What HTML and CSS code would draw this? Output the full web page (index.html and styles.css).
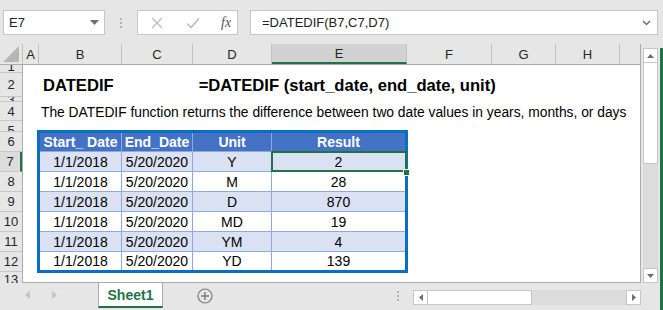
FILE: index.html
```html
<!DOCTYPE html>
<html lang="en">
<head>
    <meta charset="UTF-8">
    <title>DATEDIF</title>
    <link rel="stylesheet" href="styles.css">
</head>
<body>
    <div class="xl-app">
        <!-- Formula bar -->
        <div class="xl-toolbar">
            <div class="xl-namebox">
                <span>E7</span>
                <svg width="9" height="5" viewBox="0 0 9 5"><path d="M0 0h9L4.5 5z" fill="#6d6d6d"/></svg>
            </div>
            <div class="xl-grip"><i></i><i></i><i></i></div>
            <div class="xl-fxbox">
                <svg width="12" height="12" viewBox="0 0 12 12"><path d="M1 1l10 10M11 1L1 11" stroke="#bdbdbd" stroke-width="1.4"/></svg>
                <svg width="14" height="12" viewBox="0 0 14 12"><path d="M1 6.5l4 4L13 1.5" stroke="#bdbdbd" stroke-width="1.6" fill="none"/></svg>
                <span class="xl-fx">fx</span>
            </div>
            <div class="xl-formula">
                <span>=DATEDIF(B7,C7,D7)</span>
                <svg width="9" height="6" viewBox="0 0 9 6"><path d="M1 1l3.5 3.5L8 1" stroke="#6d6d6d" stroke-width="1.5" fill="none"/></svg>
            </div>
        </div>

        <div class="xl-main">
            <div class="xl-grid">
                <div class="xl-colheads">
                    <div class="xl-corner"><svg width="16" height="16" viewBox="0 0 16 16"><path d="M16 0V16H0z" fill="#b6b6b6"/></svg></div>
                    <div class="xl-ch w-a">A</div>
                    <div class="xl-ch w-b">B</div>
                    <div class="xl-ch w-c">C</div>
                    <div class="xl-ch w-d">D</div>
                    <div class="xl-ch w-e active">E</div>
                    <div class="xl-ch w-f">F</div>
                    <div class="xl-ch w-g">G</div>
                    <div class="xl-ch w-h">H</div>
                    <div class="xl-ch w-i"></div>
                </div>

                <div class="xl-body">
                    <div class="xl-rowheads">
                        <div class="xl-rh r-1"><span>1</span></div>
                        <div class="xl-rh r-2">2</div>
                        <div class="xl-rh r-3"><span>3</span></div>
                        <div class="xl-rh r-4">4</div>
                        <div class="xl-rh r-5"><span>5</span></div>
                        <div class="xl-rh">6</div>
                        <div class="xl-rh active">7</div>
                        <div class="xl-rh">8</div>
                        <div class="xl-rh">9</div>
                        <div class="xl-rh">10</div>
                        <div class="xl-rh">11</div>
                        <div class="xl-rh">12</div>
                        <div class="xl-rh r-13"><span>13</span></div>
                    </div>

                    <div class="xl-sheet">
                        <div class="row-1"></div>
                        <div class="row-2">
                            <span class="title">DATEDIF</span>
                            <span class="syntax">=DATEDIF (start_date, end_date, unit)</span>
                        </div>
                        <div class="row-3"></div>
                        <div class="row-4">The DATEDIF function returns the difference between two date values in years, months, or days</div>
                        <div class="row-5"></div>

                        <div class="xl-table">
                            <div class="tr th">
                                <div>Start_ Date</div><div>End_Date</div><div>Unit</div><div>Result</div>
                            </div>
                            <div class="tr band">
                                <div>1/1/2018</div><div>5/20/2020</div><div>Y</div><div class="sel">2<span class="handle"></span></div>
                            </div>
                            <div class="tr">
                                <div>1/1/2018</div><div>5/20/2020</div><div>M</div><div>28</div>
                            </div>
                            <div class="tr band">
                                <div>1/1/2018</div><div>5/20/2020</div><div>D</div><div>870</div>
                            </div>
                            <div class="tr">
                                <div>1/1/2018</div><div>5/20/2020</div><div>MD</div><div>19</div>
                            </div>
                            <div class="tr band">
                                <div>1/1/2018</div><div>5/20/2020</div><div>YM</div><div>4</div>
                            </div>
                            <div class="tr last">
                                <div>1/1/2018</div><div>5/20/2020</div><div>YD</div><div>139</div>
                            </div>
                        </div>
                    </div>
                </div>
            </div>

            <div class="xl-vscroll">
                <div class="sb-btn"><svg width="7" height="4" viewBox="0 0 7 4"><path d="M0 4h7L3.5 0z" fill="#6d6d6d"/></svg></div>
                <div class="sb-thumb"></div>
                <div class="sb-track"></div>
                <div class="sb-btn"><svg width="7" height="4" viewBox="0 0 7 4"><path d="M0 0h7L3.5 4z" fill="#6d6d6d"/></svg></div>
            </div>
        </div>

        <!-- Sheet tabs -->
        <div class="xl-tabbar">
            <div class="tab-nav">
                <svg width="5" height="8" viewBox="0 0 5 8"><path d="M5 0v8L0 4z" fill="#c4c4c4"/></svg>
                <svg width="5" height="8" viewBox="0 0 5 8"><path d="M0 0v8l5-4z" fill="#c4c4c4"/></svg>
            </div>
            <div class="tab active">Sheet1</div>
            <div class="tab-add">
                <svg width="16" height="16" viewBox="0 0 16 16"><circle cx="8" cy="8" r="7" fill="none" stroke="#7a7a7a" stroke-width="1.2"/><path d="M8 4v8M4 8h8" stroke="#7a7a7a" stroke-width="1.4"/></svg>
            </div>
            <div class="xl-grip tab-grip"><i></i><i></i><i></i></div>
            <div class="xl-hscroll">
                <div class="sb-btn"><svg width="4" height="7" viewBox="0 0 4 7"><path d="M4 0v7L0 3.5z" fill="#6d6d6d"/></svg></div>
                <div class="sb-thumb"></div>
                <div class="sb-track"></div>
                <div class="sb-btn"><svg width="4" height="7" viewBox="0 0 4 7"><path d="M0 0v7l4-3.5z" fill="#6d6d6d"/></svg></div>
            </div>
        </div>
    </div>
</body>
</html>
```

FILE: styles.css
```css
/* Excel-like sheet view */
* {
    box-sizing: border-box;
}

body {
    margin: 0;
    font-family: 'Liberation Sans', Arial, sans-serif;
    color: #000;
}

.xl-app {
    width: 663px;
    height: 310px;
    background-color: #e6e6e6;
    overflow: hidden;
}

/* Formula bar */
.xl-toolbar {
    height: 44px;
    display: flex;
    align-items: flex-start;
    padding: 10px 5px 0 3px;
    font-size: 13px;
}

.xl-namebox {
    width: 102px;
    height: 25px;
    background: #fff;
    border: 1px solid #c6c6c6;
    display: flex;
    align-items: center;
    justify-content: space-between;
    padding: 0 5px 0 5px;
    color: #222;
}

.xl-grip {
    width: 32px;
    height: 25px;
    display: flex;
    flex-direction: column;
    align-items: center;
    justify-content: center;
    gap: 2px;
}

.xl-grip i {
    width: 2px;
    height: 2px;
    background: #b3b3b3;
}

.xl-fxbox {
    width: 101px;
    height: 25px;
    background: #fff;
    border: 1px solid #c6c6c6;
    display: flex;
    align-items: center;
    padding-left: 13px;
    gap: 23px;
}

.xl-fx {
    font-family: 'Liberation Serif', serif;
    font-style: italic;
    font-size: 14px;
    color: #555;
    margin-left: -2px;
}

.xl-formula {
    flex: 1;
    height: 25px;
    margin-left: 12px;
    background: #fff;
    border: 1px solid #c6c6c6;
    display: flex;
    align-items: center;
    justify-content: space-between;
    padding: 0 6px 0 11px;
    color: #222;
}

/* Main area */
.xl-main {
    display: flex;
    height: 239px;
}

.xl-grid {
    width: 641px;
}

.xl-colheads {
    display: flex;
    height: 21px;
    border-bottom: 1px solid #ababab;
    font-size: 13px;
    color: #262626;
}

.xl-corner {
    width: 23px;
    border-right: 1px solid #c2c2c2;
    display: flex;
    align-items: flex-end;
    justify-content: flex-end;
    padding: 0 3px 2px 0;
}

.xl-ch {
    border-right: 1px solid #c2c2c2;
    display: flex;
    align-items: center;
    justify-content: center;
}

.xl-ch.active {
    background: #d2d2d2;
    border-bottom: 2px solid #217346;
}

.w-a { width: 16px; }
.w-b { width: 83px; }
.w-c { width: 71px; }
.w-d { width: 79px; }
.w-e { width: 135px; }
.w-f { width: 85px; }
.w-g { width: 64px; }
.w-h { width: 64px; }
.w-i { width: 21px; border-right: 1px solid #ababab; }

.xl-body {
    display: flex;
    height: 218px;
}

.xl-rowheads {
    width: 23px;
    border-right: 1px solid #ababab;
    font-size: 13px;
    color: #262626;
    overflow: hidden;
}

.xl-rh {
    height: 20px;
    border-bottom: 1px solid #c8c8c8;
    display: flex;
    align-items: center;
    justify-content: center;
    overflow: hidden;
}

.xl-rh.active {
    background: #dcdcdc;
    border-right: 2px solid #217346;
}

/* collapsed rows: label clipped inside its own box */
.xl-rh span {
    display: block;
    height: 100%;
    overflow: hidden;
}

.r-1 { height: 8px; }
.r-1 span { line-height: 4px; }
.r-2 { height: 24px; }
.r-3 { height: 5px; }
.r-3 span { line-height: 5px; }
.r-4 { height: 19px; }
.r-5 { height: 11px; }
.r-5 span { line-height: 19px; }
.r-13 { height: 11px; border-bottom: none; }
.r-13 span { line-height: 16px; }

.xl-sheet {
    flex: 1;
    background: #fff;
    border-right: 1px solid #ababab;
    border-bottom: 1px solid #ababab;
    position: relative;
}

.row-1 { height: 8px; }

.row-2 {
    height: 25px;
    display: flex;
    align-items: center;
    font-weight: bold;
    font-size: 16.6px;
    padding-left: 20px;
}

.row-2 .syntax {
    margin-left: 85px;
}

.row-3 { height: 5px; }

.row-4 {
    height: 19px;
    display: flex;
    align-items: center;
    padding-left: 18px;
    font-size: 13.8px;
}

.row-5 { height: 8px; }

/* Data table */
.xl-table {
    width: 371px;
    margin-left: 14px;
    border: 3px solid #0a6fc2;
    font-size: 14px;
}

.tr {
    display: grid;
    grid-template-columns: 82px 71px 79px 1fr;
    height: 20px;
    border-bottom: 1px solid #8eaadb;
}

.tr.last {
    border-bottom: none;
    height: 18px;
}

.tr > div {
    display: flex;
    align-items: center;
    justify-content: center;
    border-right: 1px solid #8eaadb;
}

.tr > div:last-child {
    border-right: none;
}

.th {
    background: #4472c4;
    color: #fff;
    font-weight: bold;
    height: 19px;
}

.band {
    background: #d9e1f2;
}

.sel {
    position: relative;
}

.sel::after {
    content: '';
    position: absolute;
    left: -1px;
    top: -1px;
    right: -2px;
    bottom: -1px;
    border: 2px solid #217346;
}

.handle {
    position: absolute;
    right: -5px;
    bottom: -5px;
    width: 7px;
    height: 7px;
    background: #217346;
    border: 1px solid #fff;
    z-index: 2;
}

/* Vertical scrollbar */
.xl-vscroll {
    width: 22px;
    margin-top: 4px;
    padding-left: 2px;
    border-right: 3px solid #217346;
    display: flex;
    flex-direction: column;
}

.sb-btn {
    flex: none;
    width: 15px;
    height: 15px;
    background: #fff;
    border: 1px solid #c6c6c6;
    display: flex;
    align-items: center;
    justify-content: center;
}

.sb-thumb {
    flex: none;
    height: 101px;
    width: 15px;
    background: #fff;
    border: 1px solid #c6c6c6;
    border-top: none;
}

.sb-track {
    flex: 1;
    width: 15px;
    background: #dcdcdc;
}

/* Sheet tab bar */
.xl-tabbar {
    height: 27px;
    display: flex;
    align-items: flex-start;
    border-right: 3px solid #217346;
}

.tab-nav {
    width: 98px;
    height: 24px;
    display: flex;
    align-items: center;
    gap: 22px;
    padding-left: 25px;
}

.tab {
    width: 65px;
    height: 25px;
    background: #fff;
    border-left: 1px solid #ababab;
    border-right: 1px solid #ababab;
    border-bottom: 2px solid #217346;
    display: flex;
    align-items: center;
    justify-content: center;
    font-size: 14px;
    font-weight: bold;
    color: #217346;
}

.tab-add {
    width: 220px;
    height: 25px;
    display: flex;
    align-items: center;
    padding-left: 34px;
}

.tab-grip {
    width: 30px;
    height: 25px;
}

.xl-hscroll {
    margin-top: 7px;
    display: flex;
    width: 228px;
    height: 15px;
}

.xl-hscroll .sb-thumb {
    width: 104px;
    height: 15px;
    border-top: 1px solid #c6c6c6;
    border-left: none;
}

.xl-hscroll .sb-track {
    height: 15px;
}
```
